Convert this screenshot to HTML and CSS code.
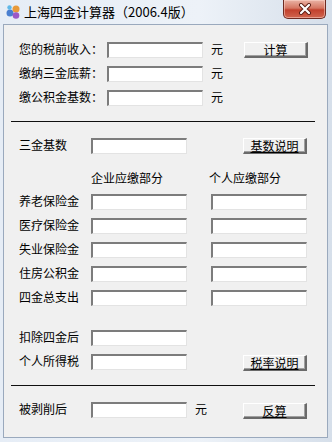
FILE: index.html
```html
<!DOCTYPE html>
<html lang="zh-CN">
<head>
    <meta charset="UTF-8">
    <title>上海四金计算器（2006.4版）</title>
    <link rel="stylesheet" href="styles.css">
</head>
<body>

    <div class="window">
        <div class="titlebar">
            <svg class="app-icon" width="16" height="16" viewBox="0 0 16 16">
                <circle cx="5" cy="9" r="3.5" fill="#4a7fd0"/>
                <circle cx="11" cy="5" r="3.5" fill="#e89a3a"/>
                <circle cx="11" cy="11.5" r="3.3" fill="#9b59c6"/>
                <circle cx="4.5" cy="3.5" r="2.2" fill="#5fb8e8"/>
            </svg>
            <span class="title">上海四金计算器（2006.4版）</span>
            <div class="close-btn">
                <svg width="14" height="12" viewBox="0 0 14 12">
                    <path d="M3 2 L11 10 M11 2 L3 10" stroke="#5a1d14" stroke-width="4" stroke-linecap="round"/>
                    <path d="M3 2 L11 10 M11 2 L3 10" stroke="#fff" stroke-width="2.2" stroke-linecap="round"/>
                </svg>
            </div>
        </div>

        <div class="client">
            <div class="section first">
                <div class="row">
                    <span class="lbl wide">您的税前收入：</span>
                    <input class="box" type="text">
                    <span class="unit">元</span>
                    <button class="btn calc">计算</button>
                </div>
                <div class="row">
                    <span class="lbl wide">缴纳三金底薪：</span>
                    <input class="box" type="text">
                    <span class="unit">元</span>
                </div>
                <div class="row">
                    <span class="lbl wide">缴公积金基数：</span>
                    <input class="box" type="text">
                    <span class="unit">元</span>
                </div>
            </div>

            <div class="sep"></div>

            <div class="section">
                <div class="row">
                    <span class="lbl">三金基数</span>
                    <input class="box" type="text">
                    <button class="btn side u">基数说明</button>
                </div>

                <div class="heads">
                    <span class="head">企业应缴部分</span>
                    <span class="head">个人应缴部分</span>
                </div>

                <div class="row">
                    <span class="lbl">养老保险金</span>
                    <input class="box" type="text">
                    <input class="box col2" type="text">
                </div>
                <div class="row">
                    <span class="lbl">医疗保险金</span>
                    <input class="box" type="text">
                    <input class="box col2" type="text">
                </div>
                <div class="row">
                    <span class="lbl">失业保险金</span>
                    <input class="box" type="text">
                    <input class="box col2" type="text">
                </div>
                <div class="row">
                    <span class="lbl">住房公积金</span>
                    <input class="box" type="text">
                    <input class="box col2" type="text">
                </div>
                <div class="row">
                    <span class="lbl">四金总支出</span>
                    <input class="box" type="text">
                    <input class="box col2" type="text">
                </div>

                <div class="row gap-top">
                    <span class="lbl">扣除四金后</span>
                    <input class="box" type="text">
                </div>
                <div class="row">
                    <span class="lbl">个人所得税</span>
                    <input class="box" type="text">
                    <button class="btn side u low">税率说明</button>
                </div>
            </div>

            <div class="sep"></div>

            <div class="section">
                <div class="row">
                    <span class="lbl">被剥削后</span>
                    <input class="box" type="text">
                    <span class="unit">元</span>
                    <button class="btn back u">反算</button>
                </div>
            </div>
        </div>
    </div>

</body>
</html>
```

FILE: styles.css
```css
* {
    margin: 0;
    padding: 0;
    box-sizing: border-box;
    font-family: "Noto Sans CJK SC", "Noto Sans", sans-serif;
}
body {
    width: 332px;
    height: 442px;
    overflow: hidden;
    background: #d9e4f1;
}
.window {
    width: 332px;
    height: 442px;
    display: flex;
    flex-direction: column;
    background: linear-gradient(90deg, #e6edf6, #edf2f8 60%, #d6dfea);
}
.titlebar {
    height: 24px;
    display: flex;
    align-items: flex-start;
    padding-left: 5px;
}
.app-icon {
    margin-top: 4px;
}
.title {
    margin-left: 3px;
    margin-top: 3px;
    font-size: 13px;
    line-height: 17px;
    color: #000;
}
.close-btn {
    margin-left: auto;
    margin-right: 6px;
    width: 43px;
    height: 19px;
    border: 1px solid #6e2b22;
    border-top: none;
    border-radius: 0 0 5px 5px;
    background: linear-gradient(#eab3a5, #d57662 45%, #c2412d 55%, #d0654f);
    box-shadow: inset 0 0 0 1px rgba(255, 220, 210, 0.5);
    display: flex;
    justify-content: center;
    align-items: center;
}
.client {
    flex: 1;
    margin: 0 4px 4px 3px;
    border: 1px solid #9aa9bd;
    background: #f0f0f0;
}
.section {
    padding-left: 15px;
}
.section.first {
    padding-top: 17px;
}
.row {
    display: flex;
    align-items: flex-start;
    height: 16px;
    margin-bottom: 8px;
}
.row.gap-top {
    margin-top: 24px;
}
.lbl {
    width: 72px;
    font-size: 12px;
    line-height: 13px;
    color: #000;
    white-space: nowrap;
}
.lbl.wide {
    width: 88px;
}
.box {
    width: 96px;
    height: 16px;
    background: #fff;
    border-style: solid;
    border-width: 2px 1px 1px 2px;
    border-color: #7c7c7c #e3e3e3 #e3e3e3 #7c7c7c;
    outline: none;
}
.box.col2 {
    margin-left: 24px;
}
.unit {
    margin-left: 8px;
    width: 12px;
    font-size: 12px;
    line-height: 14px;
}
.btn {
    width: 64px;
    height: 16px;
    font-size: 12px;
    line-height: 13px;
    color: #000;
    background: #f0f0f0;
    border-style: solid;
    border-width: 1px 2px 2px 1px;
    border-color: #fff #6a6a6a #6a6a6a #fff;
    box-shadow: inset -1px -1px 0 #a0a0a0;
}
.btn.u {
    text-decoration: underline;
}
.btn.calc {
    margin-left: 21px;
}
.btn.side {
    margin-left: 56px;
}
.btn.low {
    margin-top: 1px;
}
.btn.back {
    margin-left: 36px;
    margin-top: 1px;
}
.sep {
    margin: 15px 0 16px 7px;
    width: 304px;
    height: 1px;
    background: #101010;
}
.heads {
    display: flex;
    padding-left: 72px;
    margin-top: 17px;
    margin-bottom: 10px;
}
.head {
    width: 120px;
    font-size: 12px;
    line-height: 13px;
}
```
